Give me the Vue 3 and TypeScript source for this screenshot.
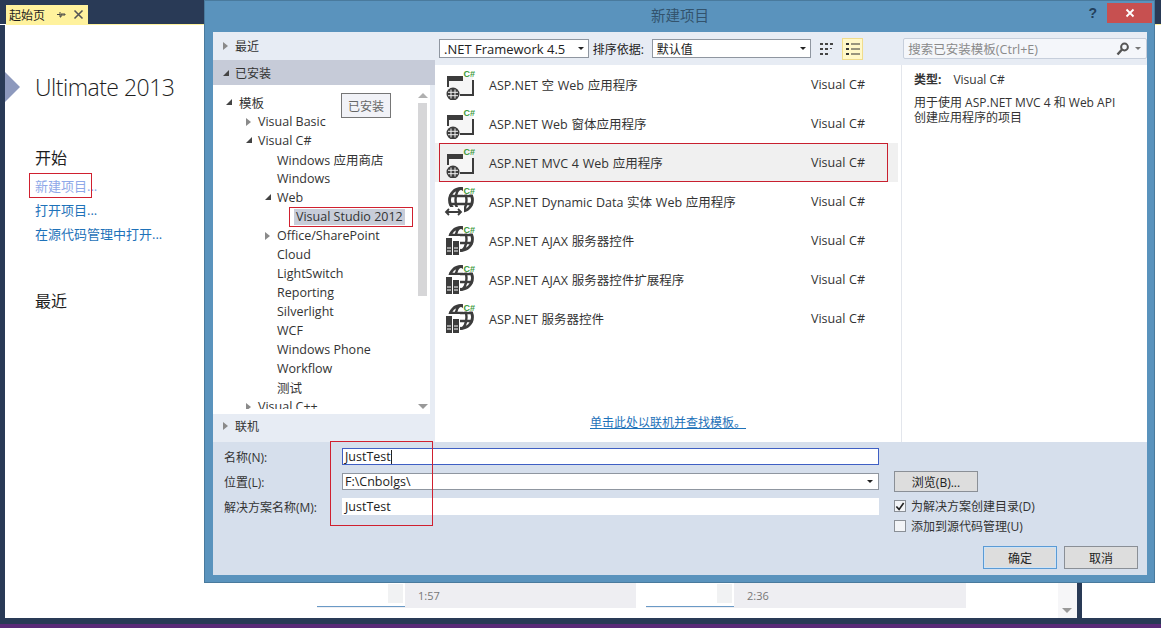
<script setup lang="ts">
interface TreeRow { label: string; indent: number; arrow?: 'open' | 'closed'; selected?: boolean }
interface Template { name: string; icon: 'app' | 'arrows' | 'server'; selected?: boolean }

const tree: TreeRow[] = [
  { label: '模板', indent: 0, arrow: 'open' },
  { label: 'Visual Basic', indent: 1, arrow: 'closed' },
  { label: 'Visual C#', indent: 1, arrow: 'open' },
  { label: 'Windows 应用商店', indent: 2 },
  { label: 'Windows', indent: 2 },
  { label: 'Web', indent: 2, arrow: 'open' },
  { label: 'Visual Studio 2012', indent: 3, selected: true },
  { label: 'Office/SharePoint', indent: 2, arrow: 'closed' },
  { label: 'Cloud', indent: 2 },
  { label: 'LightSwitch', indent: 2 },
  { label: 'Reporting', indent: 2 },
  { label: 'Silverlight', indent: 2 },
  { label: 'WCF', indent: 2 },
  { label: 'Windows Phone', indent: 2 },
  { label: 'Workflow', indent: 2 },
  { label: '测试', indent: 2 },
  { label: 'Visual C++', indent: 1, arrow: 'closed' },
]

const templates: Template[] = [
  { name: 'ASP.NET 空 Web 应用程序', icon: 'app' },
  { name: 'ASP.NET Web 窗体应用程序', icon: 'app' },
  { name: 'ASP.NET MVC 4 Web 应用程序', icon: 'app', selected: true },
  { name: 'ASP.NET Dynamic Data 实体 Web 应用程序', icon: 'arrows' },
  { name: 'ASP.NET AJAX 服务器控件', icon: 'server' },
  { name: 'ASP.NET AJAX 服务器控件扩展程序', icon: 'server' },
  { name: 'ASP.NET 服务器控件', icon: 'server' },
]
</script>

<template>
  <div class="shell">
    <div class="topbar">
      <div class="tab">
        <span class="tab-title">起始页</span>
        <svg width="11" height="11" viewBox="0 0 11 11" class="pin"><path d="M1 5.5h3M4 3v5h1V5h4v1H5" fill="none" stroke="#444" stroke-width="1"/></svg>
        <svg width="11" height="11" viewBox="0 0 11 11"><path d="M1.5 1.5l8 8M9.5 1.5l-8 8" stroke="#555" stroke-width="1.6"/></svg>
      </div>
    </div>
    <div class="tab-line"></div>

    <div class="middle">
      <div class="doc">
        <div class="chevron"></div>
        <div class="edition">Ultimate 2013</div>
        <div class="start-title">开始</div>
        <div class="start-link new">新建项目...<span class="red-box new-box"></span></div>
        <div class="start-link">打开项目...</div>
        <div class="start-link">在源代码管理中打开...</div>
        <div class="recent-title">最近</div>

        <div class="videos">
          <div class="video"><div class="thumb"></div><span>1:57</span></div>
          <div class="video"><div class="thumb"></div><span>2:36</span></div>
        </div>
        <div class="doc-scroll"><span class="arrow-down"></span></div>
      </div>
      <div class="divider"></div>
      <div class="rest"></div>
    </div>

    <div class="bar-navy"></div>
    <div class="bar-purple"></div>

    <div class="dialog">
      <div class="titlebar">
        <span class="dialog-title">新建项目</span>
        <span class="help">?</span>
        <span class="close"><svg width="10" height="10" viewBox="0 0 10 10"><path d="M1.5 1.5l7 7M8.5 1.5l-7 7" stroke="#fff" stroke-width="1.8"/></svg></span>
      </div>

      <div class="body">
        <div class="top-area">
          <aside class="left">
            <div class="node"><span class="tri closed"></span>最近</div>
            <div class="node active"><span class="tri open"></span>已安装</div>
            <div class="tree-wrap">
              <div class="tree">
                <div
                  v-for="row in tree"
                  :key="row.label"
                  class="tree-row"
                  :class="'lvl' + row.indent"
                >
                  <span v-if="row.arrow" class="tri" :class="row.arrow"></span>
                  <span class="tree-label" :class="{ sel: row.selected }">{{ row.label }}</span>
                  <span v-if="row.selected" class="red-box tree-box"></span>
                </div>
              </div>
              <div class="tree-scroll">
                <span class="arrow-up"></span>
                <div class="tree-thumb"></div>
                <span class="arrow-down"></span>
              </div>
              <div class="tooltip">已安装</div>
            </div>
            <div class="node online"><span class="tri closed"></span>联机</div>
          </aside>

          <div class="main-pane">
            <div class="toolbar">
              <div class="select fw"><span>.NET Framework 4.5</span><i class="caret"></i></div>
              <span class="sort-label">排序依据:</span>
              <div class="select sort"><span>默认值</span><i class="caret"></i></div>
              <svg class="view-icon" width="16" height="16" viewBox="0 0 16 16">
                <path d="M1 2h3v2H1zM6 2h3v2H6zM11 2h3v2h-3zM1 7h3v2H1zM6 7h3v2H6zM11 7h2v1h-2zM1 12h3v2H1zM6 12h3v2H6z" fill="#444"/>
              </svg>
              <div class="view-toggle">
                <svg width="16" height="14" viewBox="0 0 16 14"><path d="M1 1h3v2H1zM1 6h3v2H1zM1 11h3v2H1z" fill="#333"/><path d="M6 2h9M6 7h9M6 12h9" stroke="#333" stroke-width="1"/></svg>
              </div>
              <div class="search">
                <span class="search-text">搜索已安装模板(Ctrl+E)</span>
                <svg width="14" height="14" viewBox="0 0 14 14"><circle cx="8.5" cy="5" r="3.4" fill="none" stroke="#555" stroke-width="2"/><path d="M6 7.5L1.5 12.5" stroke="#555" stroke-width="2.4"/></svg>
                <i class="caret small"></i>
              </div>
            </div>

            <div class="panes">
              <div class="list">
                <div class="rows">
                  <div v-for="t in templates" :key="t.name" class="row" :class="{ selected: t.selected }">
                    <svg class="tpl-icon" width="32" height="32" viewBox="0 0 32 32">
                      <g v-if="t.icon === 'app'">
                        <rect x="3" y="9" width="26" height="18" fill="#f6f6f6"/>
                        <rect x="3" y="8" width="16" height="5" fill="#3c3c3c"/>
                        <rect x="3" y="13" width="2" height="6" fill="#3c3c3c"/>
                        <rect x="28" y="12" width="2" height="16" fill="#3c3c3c"/>
                        <rect x="16" y="26" width="14" height="2" fill="#3c3c3c"/>
                        <circle cx="9" cy="26" r="6.5" fill="#3c3c3c"/>
                        <path d="M4 24.3h10M4 27.7h10M7 21.5v9M11 21.5v9" stroke="#f2f2f2" stroke-width="1"/>
                      </g>
                      <g v-else>
                        <circle cx="17" cy="15" r="11.5" fill="none" stroke="#3c3c3c" stroke-width="2.8"/>
                        <ellipse cx="17" cy="15" rx="5.5" ry="11.5" fill="none" stroke="#3c3c3c" stroke-width="2.4"/>
                        <path d="M5 11h24M5 19h24" stroke="#3c3c3c" stroke-width="2.4"/>
                        <rect x="19" y="0" width="13" height="9.5" fill="#fff"/>
                        <g v-if="t.icon === 'arrows'">
                          <rect x="0" y="22" width="20" height="10" fill="#fff"/>
                          <path d="M2 27h15M5 24l-3 3 3 3M14 24l3 3-3 3" fill="none" stroke="#3c3c3c" stroke-width="1.8"/>
                        </g>
                        <g v-else>
                          <rect x="1" y="12" width="15" height="20" fill="#fff"/>
                          <rect x="2" y="14" width="6" height="17" fill="#3c3c3c"/>
                          <rect x="9" y="17" width="6" height="14" fill="#3c3c3c"/>
                          <path d="M3 24h4M3 27h4M10 24h4M10 27h4" stroke="#fff" stroke-width="1"/>
                        </g>
                      </g>
                      <text x="19.5" y="8.5" class="csharp">C#</text>
                    </svg>
                    <span class="row-name">{{ t.name }}</span>
                    <span class="row-lang">Visual C#</span>
                    <span v-if="t.selected" class="red-box row-box"></span>
                  </div>
                </div>
                <a class="online-link">单击此处以联机并查找模板。</a>
              </div>
              <div class="details">
                <div class="type-line"><b>类型:</b><span>Visual C#</span></div>
                <p>用于使用 ASP.NET MVC 4 和 Web API<br />创建应用程序的项目</p>
              </div>
            </div>
          </div>
        </div>

        <div class="form">
          <div class="fields">
            <label class="f-label">名称(N):</label>
            <div class="input focus"><span class="name-sel">JustTest</span></div>
            <label class="f-label">位置(L):</label>
            <div class="input combo"><span>F:\Cnbolgs\</span><i class="caret"></i></div>
            <label class="f-label">解决方案名称(M):</label>
            <div class="input plain"><span>JustTest</span></div>
            <span class="red-box form-box"></span>
          </div>
          <div class="side">
            <button class="btn browse">浏览(B)...</button>
            <div class="check"><span class="box"><svg width="11" height="11" viewBox="0 0 11 11"><path d="M1.5 5.5l3 3.2 5-7" fill="none" stroke="#222" stroke-width="1.8"/></svg></span>为解决方案创建目录(D)</div>
            <div class="check"><span class="box"></span>添加到源代码管理(U)</div>
          </div>
          <div class="actions">
            <button class="btn primary">确定</button>
            <button class="btn">取消</button>
          </div>
        </div>
      </div>
    </div>
  </div>
</template>

<style>
html, body { margin: 0; background: #fff; overflow: hidden; }
</style>

<style scoped>
.shell {
  position: relative;
  width: 1161px;
  height: 628px;
  display: flex;
  flex-direction: column;
  overflow: hidden;
  font-family: "Open Sans", "Noto Sans CJK SC", sans-serif;
  font-size: 12px;
  color: #2b2b2b;
  background: #fff;
}
.topbar { height: 24px; background: #293a56; padding: 5px 0 0 6px; box-sizing: border-box; flex: none; }
.tab { width: 82px; height: 19px; background: #fff29d; display: flex; align-items: center; gap: 6px; padding-left: 3px; box-sizing: border-box; }
.tab-title { font-size: 12px; color: #1e1e1e; width: 41px; white-space: nowrap; }
.tab-line { height: 1px; background: #fff29d; margin-left: 6px; flex: none; }
.middle { flex: 1; display: flex; min-height: 0; }
.doc { position: relative; width: 1077px; border-left: 5px solid #293a56; box-sizing: border-box; padding-left: 30px; flex: none; background: #fff; }
.chevron { position: absolute; left: 0; top: 47px; border-left: 15px solid #8d99bd; border-top: 15px solid transparent; border-bottom: 15px solid transparent; }
.edition { margin-top: 44px; font-size: 23px; line-height: 36px; font-weight: 300; color: #1e1e1e; font-family: "Open Sans", sans-serif; letter-spacing: -0.5px; white-space: nowrap; }
.start-title { margin-top: 41px; font-size: 16px; line-height: 24px; color: #1e1e1e; }
.start-link { position: relative; width: fit-content; font-size: 13px; line-height: 24px; color: #1e72b9; white-space: nowrap; margin-top: 0; }
.start-link.new { color: #8ea8e8; margin-top: 4px; }
.recent-title { margin-top: 43px; font-size: 16px; line-height: 24px; color: #1e1e1e; }
.videos { position: absolute; left: 312px; top: 558px; display: flex; gap: 10px; }
.video { width: 319px; height: 25px; background: #eeeef2; display: flex; align-items: center; font-size: 11px; color: #777; gap: 13px; }
.video + .video { width: 320px; }
.thumb { position: relative; width: 88px; height: 24px; align-self: flex-start; background: #fff; border-bottom: 1px solid #6a9ac6; box-sizing: border-box; flex: none; }
.thumb::after { content: ""; position: absolute; right: 2px; top: 1px; width: 15px; height: 19px; background: #f1f2f3; }
.doc-scroll { position: absolute; right: 0; top: 0; bottom: 0; width: 19px; background: #f6f6f8; display: flex; justify-content: center; align-items: flex-end; padding: 0 2px 5px 0; box-sizing: border-box; }
.divider { width: 5px; background: #293a56; flex: none; }
.rest { flex: 1; background: #fff; }
.bar-navy { height: 6px; background: #293a56; flex: none; }
.bar-purple { height: 4px; background: #5a2a78; flex: none; }

.red-box { position: absolute; border: 1px solid #d0202f; box-sizing: border-box; pointer-events: none; }
.new-box { left: -6px; top: -1px; width: 63px; height: 25px; }

.dialog {
  position: absolute;
  left: 204px; top: 0;
  width: 951px; height: 583px;
  background: #5a93bd;
  border: 1px solid #497a9d;
  box-sizing: border-box;
  display: flex;
  flex-direction: column;
  padding: 0 7px 7px 8px;
}
.titlebar { position: relative; height: 31px; flex: none; display: flex; align-items: center; justify-content: center; }
.dialog-title { font-size: 14.5px; color: #33536d; position: relative; top: -2px; }
.help { position: absolute; right: 50px; top: 4px; color: #22405c; font-weight: 700; font-size: 14px; font-family: "Liberation Sans", sans-serif; }
.close { position: absolute; right: -5px; top: 2px; width: 45px; height: 20px; background: #c75050; display: flex; align-items: center; justify-content: center; }
.body { flex: 1; display: flex; flex-direction: column; min-height: 0; background: #e7ecf4; }
.top-area { height: 410px; display: flex; flex: none; }

.left { position: relative; width: 222px; display: flex; flex-direction: column; flex: none; background: #e7ecf4; }
.node { height: 28px; display: flex; align-items: center; padding-left: 10px; gap: 7px; flex: none; color: #333; }
.node.active { height: 25px; background: #c6cbd8; gap: 6px; }
.node.online { height: 28px; padding-bottom: 4px; box-sizing: border-box; }
.tri { display: inline-block; width: 0; height: 0; flex: none; }
.tri.closed { border-left: 5px solid #8a8a8a; border-top: 4.5px solid transparent; border-bottom: 4.5px solid transparent; }
.tri.open { border-right: 6px solid #444; border-top: 6px solid transparent; }
.tree-wrap { position: relative; flex: 1; min-height: 0; display: flex; align-items: flex-start; background: #fff; }
.tree { flex: 1; height: 324px; overflow: hidden; padding-top: 8px; box-sizing: border-box; min-width: 0; }
.tree-row { position: relative; height: 19px; display: flex; align-items: center; white-space: nowrap; color: #333; font-size: 12.5px; }
.tree-row .tri { position: absolute; top: 6px; }
.lvl0 { padding-left: 26px; }
.lvl0 .tri { left: 13px; }
.lvl1 { padding-left: 45px; }
.lvl1 .tri { left: 33px; }
.lvl2 { padding-left: 64px; }
.lvl2 .tri { left: 52px; }
.lvl3 { padding-left: 81px; }
.tree-label.sel { background: #c8cdd9; padding: 0 2px; line-height: 16px; }
.tree-box { left: 76px; top: 0; width: 124px; height: 20px; }
.tree-scroll { width: 20px; height: 100%; flex: none; display: flex; flex-direction: column; align-items: center; justify-content: space-between; padding: 8px 0 5px 0; box-sizing: border-box; background: #fff; border-right: 5px solid #e7ecf4; position: relative; }
.tree-thumb { position: absolute; left: 3px; top: 18px; width: 9px; height: 193px; background: #d6d6d8; }
.arrow-up { width: 0; height: 0; border-left: 5px solid transparent; border-right: 5px solid transparent; border-bottom: 5px solid #b0b0b0; }
.arrow-down { width: 0; height: 0; border-left: 5px solid transparent; border-right: 5px solid transparent; border-top: 5px solid #999; }
.tooltip { position: absolute; left: 128px; top: 8px; width: 50px; height: 25px; box-sizing: border-box; border: 1px solid #767676; background: #f1f2f7; color: #666; font-size: 12px; display: flex; align-items: center; justify-content: center; }

.main-pane { flex: 1; min-width: 0; display: flex; flex-direction: column; }
.toolbar { height: 33px; flex: none; display: flex; align-items: center; padding-left: 4px; position: relative; }
.select { height: 19px; border: 1px solid #8f96a0; background: #fff; box-sizing: border-box; display: flex; align-items: center; justify-content: space-between; padding: 0 4px; color: #222; font-size: 13px; }
.select.fw { width: 150px; }
.select.sort { width: 160px; font-size: 12px; }
.sort-label { width: 63px; padding-left: 4px; box-sizing: border-box; font-size: 12px; color: #222; white-space: nowrap; }
.caret { display: inline-block; width: 0; height: 0; border-left: 3px solid transparent; border-right: 3px solid transparent; border-top: 3px solid #222; flex: none; }
.caret.small { border-top-color: #777; }
.view-icon { margin-left: 8px; }
.view-toggle { margin-left: 7px; width: 21px; height: 22px; background: #fff8c8; border: 1px solid #f0dc8c; box-sizing: border-box; display: flex; align-items: center; justify-content: center; }
.search { margin-left: 40px; width: 244px; height: 21px; box-sizing: border-box; border: 1px solid #c6cedb; background: #f4f6fa; border-radius: 2px; display: flex; align-items: center; padding: 0 5px 0 4px; gap: 5px; color: #8a8a8a; }
.search-text { flex: 1; font-size: 12.5px; white-space: nowrap; }
.panes { flex: 1; min-height: 0; display: flex; background: #fff; }
.list { position: relative; width: 466px; flex: none; border-right: 1px solid #e3e6ec; background: #fff; }
.rows { display: flex; flex-direction: column; }
.row { position: relative; height: 39px; display: flex; align-items: center; padding-left: 9px; flex: none; font-size: 12.5px; word-spacing: 0.5px; color: #333; }
.row.selected { background: #f0f0f0; margin-right: 3px; }
.tpl-icon { flex: none; margin-top: -2px; }
.csharp { font-size: 9px; font-weight: 700; fill: #3c9a3c; font-family: "Liberation Sans", sans-serif; }
.row-name { margin-left: 13px; width: 322px; white-space: nowrap; flex: none; }
.row-lang { white-space: nowrap; }
.row .row-box { left: 4px; top: 0; width: 449px; height: 39px; border: 1px solid #c8202f; }
.online-link { position: absolute; left: 155px; top: 348px; color: #1e72b9; text-decoration: underline; font-size: 12px; white-space: nowrap; }
.details { flex: 1; min-width: 0; padding: 6px 0 0 12px; color: #333; font-size: 12px; }
.type-line { display: flex; gap: 12px; line-height: 18px; }
.type-line b { font-weight: 700; }
.details p { margin: 6px 0 0; line-height: 15px; white-space: nowrap; }

.form { position: relative; flex: 1; min-height: 0; background: #d6dfec; padding: 6px 0 0 11px; display: flex; color: #333; }
.fields { position: relative; display: grid; grid-template-columns: 118px 537px; grid-auto-rows: 17px; row-gap: 8px; align-items: center; height: fit-content; }
.f-label { font-size: 12px; white-space: nowrap; }
.input { height: 17px; box-sizing: border-box; background: #fff; display: flex; align-items: center; padding-left: 2px; font-size: 12.5px; color: #222; }
.input.focus { border: 1px solid #3f5fc4; }
.input.combo { border: 1px solid #8f96a0; justify-content: space-between; padding-right: 5px; }
.input.plain { padding-left: 3px; }
.name-sel { border-right: 1px solid #222; line-height: 14px; }
.form-box { left: 106px; top: -7px; width: 103px; height: 85px; }
.side { margin-left: 15px; padding-top: 23px; display: flex; flex-direction: column; }
.btn { width: 74px; height: 23px; box-sizing: border-box; border: 1px solid #8a8f96; background: #dddddd; font-family: inherit; font-size: 12px; color: #222; padding: 0; }
.btn.browse { width: 84px; height: 21px; margin-bottom: 4px; }
.btn.primary { border-color: #5b9bd5; box-shadow: inset 0 0 0 1px #cfe3f5; }
.check { display: flex; align-items: center; gap: 5px; height: 20px; font-size: 12px; white-space: nowrap; color: #333; }
.box { width: 12px; height: 12px; box-sizing: border-box; border: 1px solid #8a8f96; background: #f2f4f7; display: flex; align-items: center; justify-content: center; flex: none; }
.actions { position: absolute; right: 9px; bottom: 6px; display: flex; gap: 7px; }
</style>
